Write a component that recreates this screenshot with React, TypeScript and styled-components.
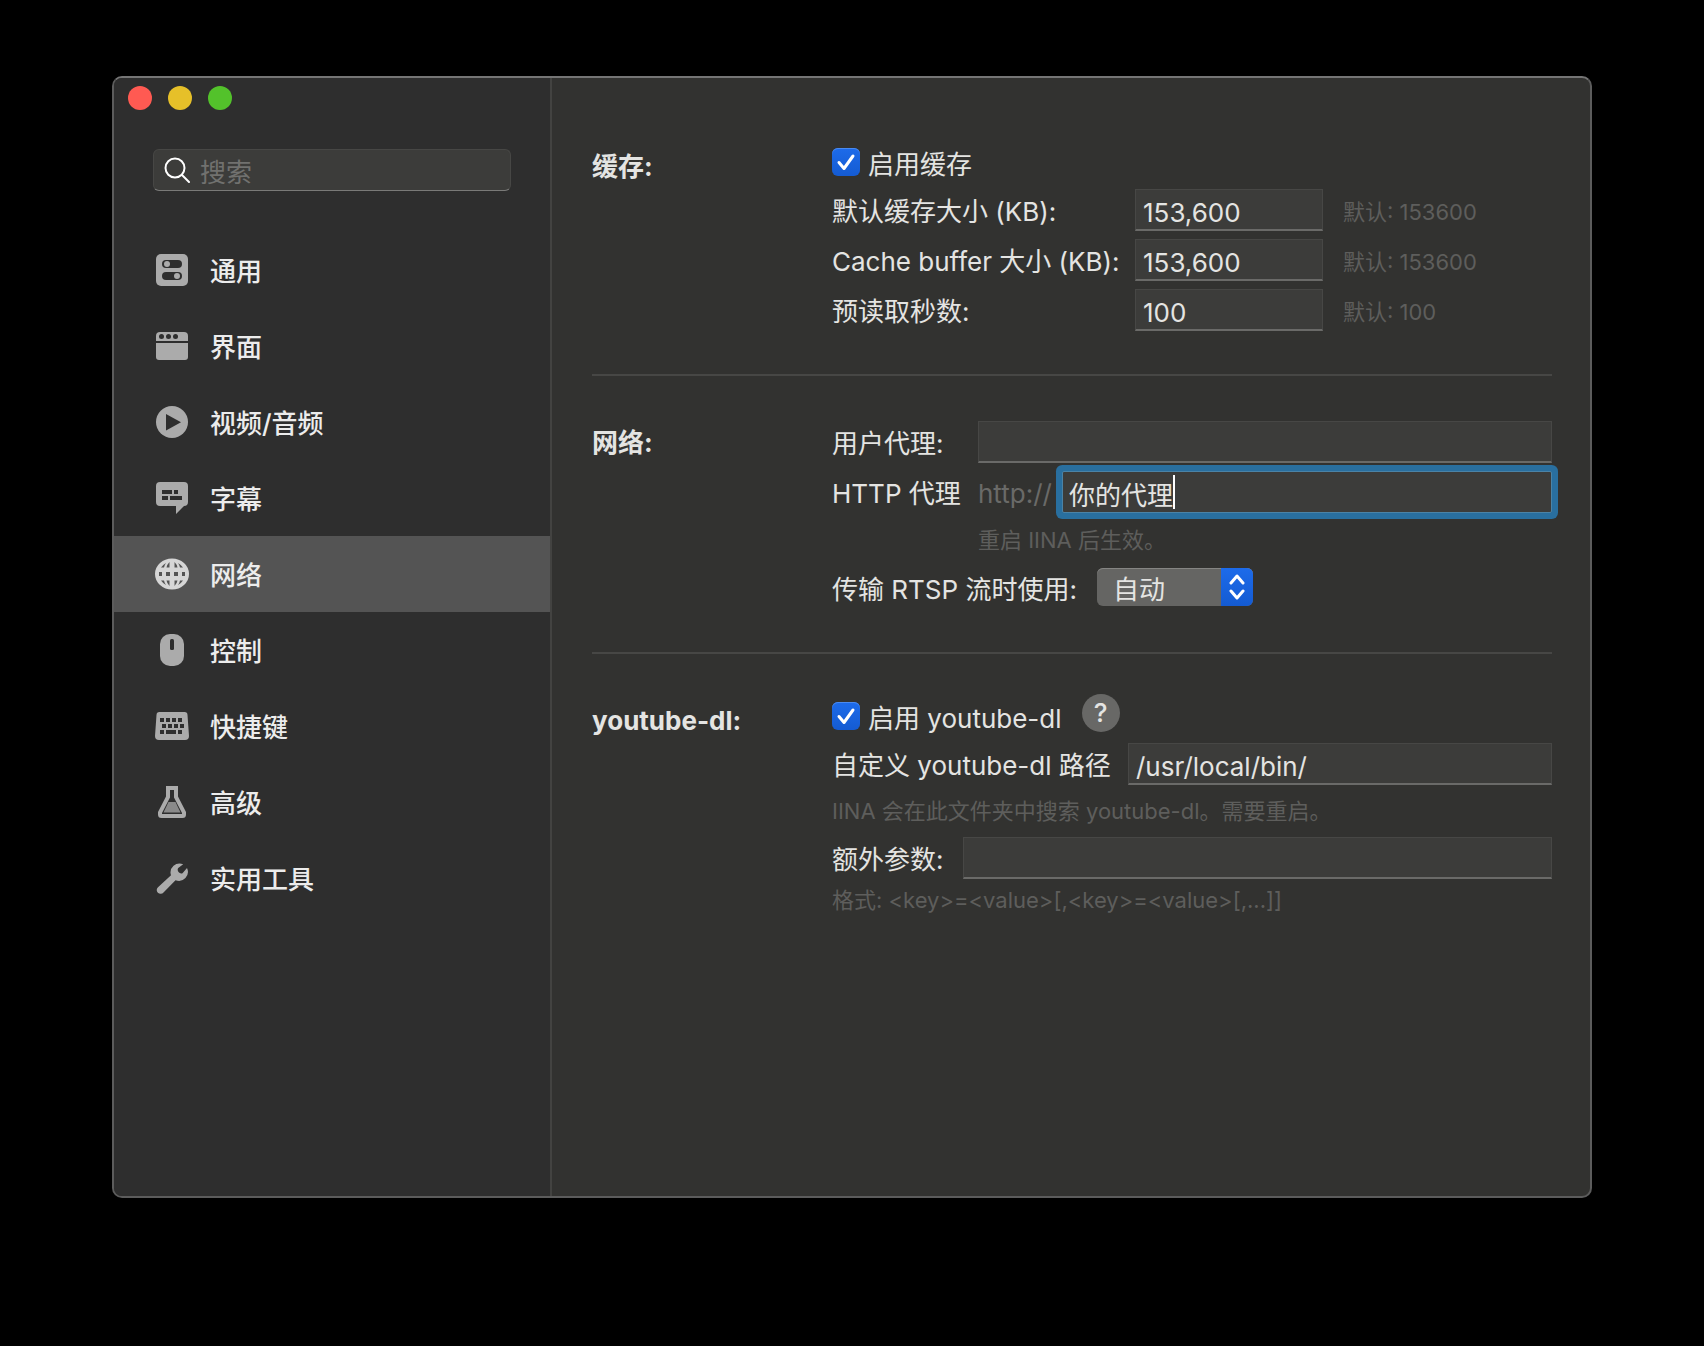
import React from "react";
import styled, { createGlobalStyle, css } from "styled-components";

const color = {
  sidebar: "#2e2e2e",
  panel: "#323230",
  field: "#3c3c3a",
  fieldEdge: "#474745",
  fieldBase: "#6a6a68",
  line: "#474745",
  text: "#e4e4e2",
  muted: "#5e5e5c",
  icon: "#ababab",
  accent: "#1763e0",
  ring: "#296f9f",
};

const GlobalStyle = createGlobalStyle`
  *, *::before, *::after { box-sizing: border-box; }
  body {
    margin: 0;
    background: #000;
    color: ${color.text};
    font: 400 26px/36px Inter, "Noto Sans CJK SC", sans-serif;
  }
  button, input, select { font: inherit; color: inherit; margin: 0; }
`;

const Desktop = styled.div`
  display: flex;
  min-height: 100vh;
  padding: 76px 112px 148px;
`;

const Window = styled.div`
  flex: 1;
  display: flex;
  min-width: 0;
  overflow: hidden;
  border: 2px solid #5c5c5c;
  border-top-color: #757575;
  border-radius: 10px;
  background: ${color.panel};
`;

const Sidebar = styled.aside`
  flex: 0 0 438px;
  min-width: 0;
  display: flex;
  flex-direction: column;
  border-right: 2px solid #434341;
  background: ${color.sidebar};
`;

const TrafficLights = styled.div`
  display: flex;
  gap: 16px;
  padding: 8px 14px 0;
`;

const Light = styled.button<{ $fill: string }>`
  width: 24px;
  height: 24px;
  padding: 0;
  border: 0;
  border-radius: 50%;
  background: ${(p) => p.$fill};
`;

const SearchBox = styled.label`
  display: flex;
  align-items: center;
  gap: 10px;
  height: 42px;
  margin: 39px 39px 41px;
  padding: 0 10px;
  border: 1px solid ${color.fieldEdge};
  border-bottom-color: #7a7a78;
  border-radius: 6px;
  background: ${color.field};
`;

const SearchInput = styled.input`
  flex: 1;
  min-width: 0;
  height: 38px;
  padding: 4px 0 0;
  border: 0;
  outline: 0;
  background: transparent;
  &::placeholder { color: #71716f; opacity: 1; }
`;

const Nav = styled.nav`
  display: flex;
  flex-direction: column;
`;

const NavItem = styled.button<{ $active: boolean }>`
  display: flex;
  align-items: center;
  gap: 20px;
  height: 76px;
  padding: 0 40px;
  border: 0;
  background: ${(p) => (p.$active ? "#545454" : "transparent")};
  color: ${(p) => (p.$active ? "#d6d6d6" : color.icon)};
  text-align: left;
`;

const NavText = styled.span`
  padding-top: 4px;
  color: #ececec;
  font-weight: 500;
`;

const Main = styled.main`
  flex: 1;
  min-width: 0;
  padding: 22px 38px 0 40px;
`;

const Section = styled.section`
  display: grid;
  grid-template-columns: 240px minmax(0, 1fr);
  padding: 41px 0 39px;
  & + & { border-top: 2px solid ${color.line}; }
`;

const Title = styled.h2`
  margin: 0;
  font-size: 26px;
  line-height: 52px;
  font-weight: 700;
`;

const Rows = styled.div`
  display: flex;
  flex-direction: column;
`;

const CheckRow = styled.div`
  display: flex;
  align-items: center;
  gap: 20px;
  height: 42px;
  margin-bottom: 2px;
`;

const CheckLabel = styled.label`
  display: flex;
  align-items: center;
  gap: 8px;
`;

const CheckText = styled.span`
  padding-top: 5px;
`;

const CheckMark = styled.span`
  display: grid;
  width: 28px;
  height: 28px;
  & > * { grid-area: 1 / 1; }
  svg { pointer-events: none; }
`;

const CheckInput = styled.input`
  appearance: none;
  width: 28px;
  height: 28px;
  border-radius: 6px;
  background: linear-gradient(#1d6bea, #145bd2);
  box-shadow: inset 0 1px 0 #4a8af0;
`;

const Row = styled.div`
  display: flex;
  align-items: center;
  height: 50px;
`;

const RowLabel = styled.label<{ $width?: number }>`
  flex: none;
  width: ${(p) => (p.$width ? `${p.$width}px` : "auto")};
  padding-top: 3px;
  white-space: nowrap;
`;

const fieldBox = css`
  height: 42px;
  border: 1px solid ${color.fieldEdge};
  border-bottom: 2px solid ${color.fieldBase};
  background: ${color.field};
`;

const Field = styled.input<{ $width?: number }>`
  ${fieldBox}
  flex: ${(p) => (p.$width ? `0 0 ${p.$width}px` : "1")};
  width: ${(p) => (p.$width ? `${p.$width}px` : "auto")};
  min-width: 0;
  padding: 6px 7px 0;
  outline: 0;
`;

const FocusedField = styled.span`
  ${fieldBox}
  flex: 1;
  display: flex;
  align-items: center;
  min-width: 0;
  padding: 0 6px;
  border: 1px solid #4b83a6;
  box-shadow: 0 0 0 6px ${color.ring};
  border-radius: 2px;
`;

const GrowingInput = styled.input`
  field-sizing: content;
  height: 38px;
  padding: 2px 0 0;
  border: 0;
  outline: 0;
  background: transparent;
  caret-color: transparent;
`;

const Caret = styled.span`
  width: 2px;
  height: 34px;
  background: #fff;
`;

const Prefix = styled.span`
  flex: none;
  width: 84px;
  padding-top: 3px;
  color: #6a6a68;
`;

const Hint = styled.span`
  padding: 4px 0 0 20px;
  color: ${color.muted};
  font-size: 22px;
  white-space: nowrap;
`;

const HintLine = styled.p<{ $height: number; $indent?: number }>`
  margin: 0;
  padding-left: ${(p) => p.$indent ?? 0}px;
  color: ${color.muted};
  font-size: 22px;
  line-height: ${(p) => p.$height}px;
`;

const Popup = styled.span`
  display: grid;
  grid-template-columns: 124px 32px;
  height: 38px;
  margin: 0 0 2px 20px;
  overflow: hidden;
  border-radius: 6px;
  background: #656563;
  box-shadow: inset 0 1px 0 #858583;
`;

const PopupSelect = styled.select`
  appearance: none;
  grid-area: 1 / 1 / 2 / 3;
  height: 38px;
  padding: 4px 32px 0 16px;
  border: 0;
  outline: 0;
  background: transparent;
`;

const PopupArrows = styled.span`
  grid-area: 1 / 2;
  display: grid;
  place-items: center;
  background: linear-gradient(#1d6bea, #145bd2);
  pointer-events: none;
`;

const HelpButton = styled.button`
  width: 38px;
  height: 38px;
  margin-bottom: 6px;
  padding: 0;
  border: 0;
  border-radius: 50%;
  background: #686866;
  font-weight: 500;
  line-height: 38px;
`;

const Icon = ({ children }: { children: React.ReactNode }) => (
  <svg width="36" height="32" viewBox="0 0 36 32" fill="currentColor" aria-hidden="true">
    {children}
  </svg>
);

const icons = {
  general: (
    <Icon>
      <rect x="2" width="32" height="32" rx="5" />
      <rect x="8" y="6" width="20" height="8" rx="4" fill="#2e2e2e" />
      <rect x="8" y="18" width="20" height="8" rx="4" fill="#2e2e2e" />
      <circle cx="13" cy="10" r="3" />
      <circle cx="23" cy="22" r="3" />
    </Icon>
  ),
  interface: (
    <Icon>
      <path d="M2 11V6a4 4 0 0 1 4-4h24a4 4 0 0 1 4 4v5z" />
      <path d="M2 13h32v14a3 3 0 0 1-3 3H5a3 3 0 0 1-3-3z" />
      <g fill="#2e2e2e">
        <circle cx="7.5" cy="6.5" r="2.5" />
        <circle cx="14.5" cy="6.5" r="2.5" />
        <circle cx="21.5" cy="6.5" r="2.5" />
      </g>
    </Icon>
  ),
  media: (
    <Icon>
      <circle cx="18" cy="16" r="16" />
      <path d="M12 8v16.500l15-8.200z" fill="#2e2e2e" />
    </Icon>
  ),
  subtitle: (
    <Icon>
      <path d="M6 0h24a4 4 0 0 1 4 4v16a4 4 0 0 1-4 4l-8 8v-8H6a4 4 0 0 1-4-4V4a4 4 0 0 1 4-4z" />
      <g fill="#2e2e2e">
        <path d="M8 8h10v4H8zM20 8h4v4h-4zM8 14h6v4H8zM16 14h12v4H16z" />
      </g>
    </Icon>
  ),
  network: (
    <Icon>
      <ellipse cx="18" cy="16" rx="17" ry="15.500" />
      <g fill="#545454">
        <path d="M5 14h3v4H5zM12 14h4v4h-4zM20 14h4v4h-4zM28 14h3v4h-3z" />
        <path d="M7 9.500q2-3 5-4.500-1.500 2-2 4.500zM12.500 9.500q.5-3 3-5.500v5.500zM23.500 9.500q-.5-3-3-5.500v5.500zM29 9.500q-2-3-5-4.500 1.500 2 2 4.500z" />
        <path d="M7 22.500q2 3 5 4.500-1.500-2-2-4.500zM12.500 22.500q.5 3 3 5.500v-5.500zM23.500 22.500q-.5 3-3 5.500v-5.500zM29 22.500q-2 3-5 4.500 1.500-2 2-4.500z" />
      </g>
    </Icon>
  ),
  control: (
    <Icon>
      <rect x="6" width="24" height="32" rx="10" />
      <rect x="16" y="5" width="4" height="11" rx="1.500" fill="#2e2e2e" />
    </Icon>
  ),
  keys: (
    <Icon>
      <path d="M5.500 2h25a3 3 0 0 1 3 3l1.500 21a4 4 0 0 1-4 4H5a4 4 0 0 1-4-4L2.500 5a3 3 0 0 1 3-3z" />
      <path
        fill="#2e2e2e"
        d="M6 8h4v4H6zM12 8h4v4h-4zM18 8h4v4h-4zM24 8h4v4h-4zM8 14h4v4H8zM14 14h4v4h-4zM20 14h4v4h-4zM26 14h4v4h-4zM6 20h4v4H6zM12 20h10v4H12zM24 20h4v4h-4z"
      />
    </Icon>
  ),
  advanced: (
    <Icon>
      <path
        fillRule="evenodd"
        d="M12 0h12v10.500L32 26v2.500a3.500 3.500 0 0 1-3.500 3.500h-21A3.500 3.500 0 0 1 4 28.500V26l8-15.500zM16 4v7.500L8 27v1h20v-1l-8-15.500V4z"
      />
      <path d="M14.500 16h7l5 10.500h-17z" fill="#8a8a8a" />
    </Icon>
  ),
  utilities: (
    <Icon>
      <path d="M29.200 2.300a9 9 0 0 0-12.200 11L4 25.200a3.800 3.800 0 1 0 5.500 5.200L21.500 18.200A9 9 0 0 0 33 6l-4.500 5.200q-2.500.8-4-1.200t-.3-3.900z" />
    </Icon>
  ),
};

const Tick = () => (
  <svg width="28" height="28" viewBox="0 0 28 28" fill="none" stroke="#fff" strokeWidth="3" strokeLinecap="round" strokeLinejoin="round" aria-hidden="true">
    <path d="M7 14.500l5 6L21 8" />
  </svg>
);

const navItems: { name: string; icon: keyof typeof icons }[] = [
  { name: "通用", icon: "general" },
  { name: "界面", icon: "interface" },
  { name: "视频/音频", icon: "media" },
  { name: "字幕", icon: "subtitle" },
  { name: "网络", icon: "network" },
  { name: "控制", icon: "control" },
  { name: "快捷键", icon: "keys" },
  { name: "高级", icon: "advanced" },
  { name: "实用工具", icon: "utilities" },
];

const cacheRows = [
  { id: "cache-size", label: "默认缓存大小 (KB):", value: "153,600", hint: "默认: 153600" },
  { id: "cache-buffer", label: "Cache buffer 大小 (KB):", value: "153,600", hint: "默认: 153600" },
  { id: "readahead", label: "预读取秒数:", value: "100", hint: "默认: 100" },
];

const CheckBox = ({ children }: { children: React.ReactNode }) => (
  <CheckLabel>
    <CheckMark>
      <CheckInput type="checkbox" defaultChecked />
      <Tick />
    </CheckMark>
    <CheckText>{children}</CheckText>
  </CheckLabel>
);

export default function App() {
  return (
    <>
      <GlobalStyle />
      <Desktop>
        <Window>
          <Sidebar>
            <TrafficLights>
              <Light $fill="#ff5a52" aria-label="关闭" />
              <Light $fill="#e6c029" aria-label="最小化" />
              <Light $fill="#53c22b" aria-label="缩放" />
            </TrafficLights>
            <SearchBox>
              <svg width="26" height="26" viewBox="0 0 26 26" fill="none" stroke="#fff" strokeWidth="2" strokeLinecap="round" aria-hidden="true">
                <circle cx="11" cy="11" r="9.500" />
                <path d="M18 18l7 7" />
              </svg>
              <SearchInput type="search" placeholder="搜索" aria-label="搜索" />
            </SearchBox>
            <Nav>
              {navItems.map((item) => (
                <NavItem key={item.name} $active={item.icon === "network"}>
                  {icons[item.icon]}
                  <NavText>{item.name}</NavText>
                </NavItem>
              ))}
            </Nav>
          </Sidebar>

          <Main>
            <Section>
              <Title>缓存:</Title>
              <Rows>
                <CheckRow>
                  <CheckBox>启用缓存</CheckBox>
                </CheckRow>
                {cacheRows.map((row) => (
                  <Row key={row.id}>
                    <RowLabel htmlFor={row.id} $width={303}>{row.label}</RowLabel>
                    <Field id={row.id} $width={188} defaultValue={row.value} />
                    <Hint>{row.hint}</Hint>
                  </Row>
                ))}
              </Rows>
            </Section>

            <Section>
              <Title>网络:</Title>
              <Rows>
                <Row>
                  <RowLabel htmlFor="user-agent" $width={146}>用户代理:</RowLabel>
                  <Field id="user-agent" />
                </Row>
                <Row>
                  <RowLabel htmlFor="http-proxy" $width={146}>HTTP 代理</RowLabel>
                  <Prefix>http://</Prefix>
                  <FocusedField>
                    <GrowingInput id="http-proxy" defaultValue="你的代理" />
                    <Caret />
                  </FocusedField>
                </Row>
                <HintLine $height={46} $indent={146}>重启 IINA 后生效。</HintLine>
                <Row>
                  <RowLabel htmlFor="rtsp">传输 RTSP 流时使用:</RowLabel>
                  <Popup>
                    <PopupSelect id="rtsp" defaultValue="auto">
                      <option value="auto">自动</option>
                    </PopupSelect>
                    <PopupArrows>
                      <svg width="16" height="26" viewBox="0 0 16 26" fill="none" stroke="#fff" strokeWidth="3" strokeLinecap="round" strokeLinejoin="round" aria-hidden="true">
                        <path d="M2 9l6-7 6 7M2 17l6 7 6-7" />
                      </svg>
                    </PopupArrows>
                  </Popup>
                </Row>
              </Rows>
            </Section>

            <Section>
              <Title>youtube-dl:</Title>
              <Rows>
                <CheckRow>
                  <CheckBox>启用 youtube-dl</CheckBox>
                  <HelpButton>?</HelpButton>
                </CheckRow>
                <Row>
                  <RowLabel htmlFor="ytdl-path" $width={296}>自定义 youtube-dl 路径</RowLabel>
                  <Field id="ytdl-path" defaultValue="/usr/local/bin/" />
                </Row>
                <HintLine $height={44}>IINA 会在此文件夹中搜索 youtube-dl。需要重启。</HintLine>
                <Row>
                  <RowLabel htmlFor="ytdl-args" $width={131}>额外参数:</RowLabel>
                  <Field id="ytdl-args" />
                </Row>
                <HintLine $height={34}>{"格式: <key>=<value>[,<key>=<value>[,...]]"}</HintLine>
              </Rows>
            </Section>
          </Main>
        </Window>
      </Desktop>
    </>
  );
}
